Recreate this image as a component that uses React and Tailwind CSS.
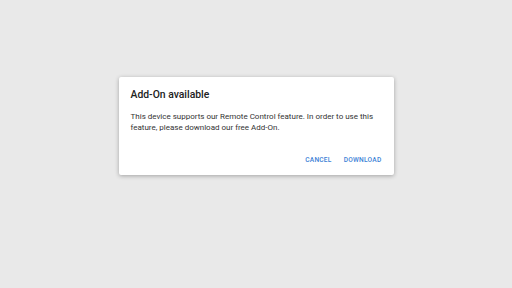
export default function App() {
  return (
    <div className="w-[512px] h-[288px] bg-[#e9e9e9] flex justify-center pt-[77px]" style={{ fontFamily: "Roboto, 'Noto Sans', sans-serif" }}>
      <div className="w-[275px] h-[98px] bg-white rounded-[2px] shadow-[0_1px_4px_rgba(0,0,0,0.3)] flex flex-col pl-[12px] pr-[12px]">
        <div className="pt-[11px] text-[10.4px] leading-[14px] font-medium text-[#212121]">Add-On available</div>
        <div className="pt-[9px] text-[8px] leading-[11px] text-[#333]">
          This device supports our Remote Control feature. In order to use this feature, please download our free Add-On.
        </div>
        <div className="mt-auto pb-[9px] flex justify-end gap-[12px] text-[6.6px] font-medium tracking-[0.25px] text-[#3b82d6]">
          <span>CANCEL</span>
          <span>DOWNLOAD</span>
        </div>
      </div>
    </div>
  );
}
